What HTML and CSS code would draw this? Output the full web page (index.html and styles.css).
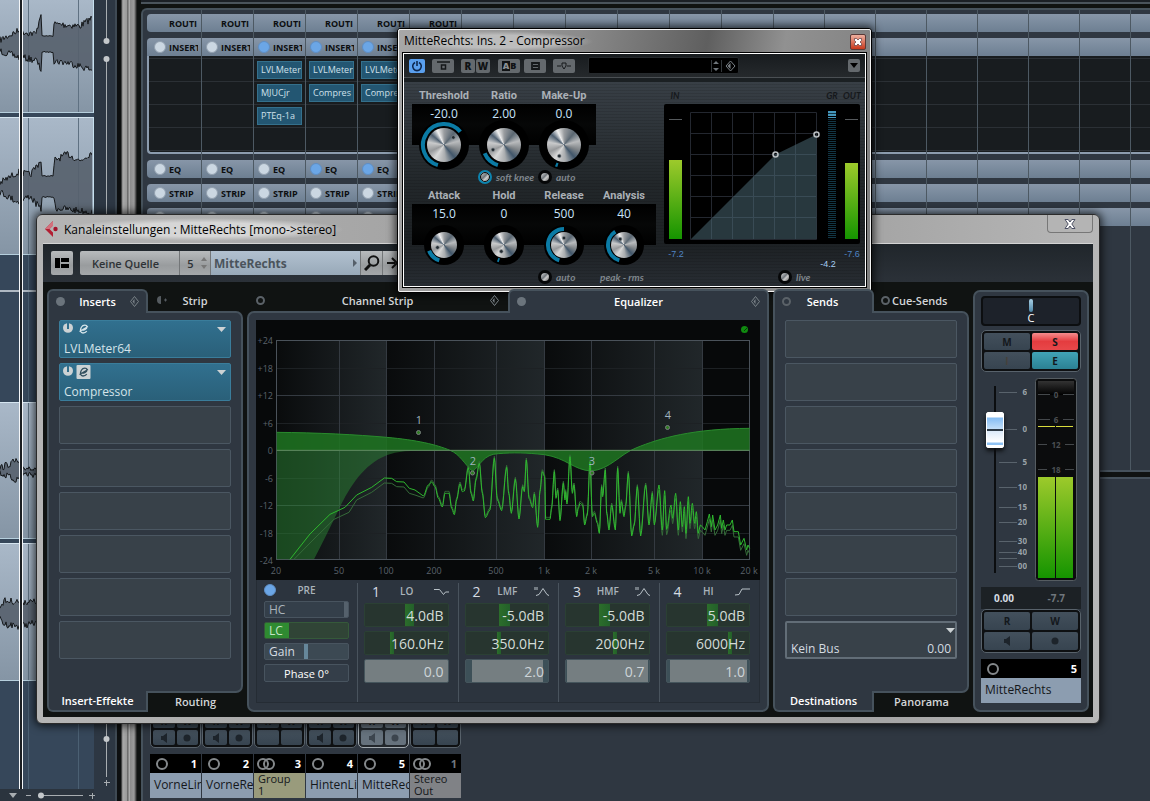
FILE: index.html
```
<!DOCTYPE html>
<html lang="de">
<head>
    <meta charset="UTF-8">
    <meta name="viewport" content="width=device-width, initial-scale=1.0">
    <title>Kanaleinstellungen : MitteRechts</title>
    <link rel="stylesheet" href="styles.css">
</head>
<body>
    <div class="arrange">
        <div class="tracks">
            <div class="clip clip-a"><svg class="wave" data-wave="0" width="92" height="113"></svg></div>
            <div class="clip clip-b"><svg class="wave" data-wave="1" width="92" height="137"></svg></div>
            <div class="lane lane-a"></div>
            <div class="lane lane-b"></div>
            <div class="clip clip-c"><svg class="wave" data-wave="2" width="92" height="137"></svg></div>
            <div class="clip clip-d"><svg class="wave" data-wave="3" width="92" height="138"></svg></div>
            <div class="lane lane-c"></div>
            <div class="cursor"></div>
        </div>
        <div class="zoom-x">
            <svg width="117" height="12"><path d="M9 4h8l-4 5z" fill="#a8adb1"/><path d="M26 6.500h5M38 6.500h45M89 6.500h6M92.500 4v6" stroke="#a8adb1" fill="none"/><circle cx="41" cy="6.500" r="3" fill="#c4c8cb"/></svg>
        </div>
    </div>
    <div class="zoom-y">
        <svg width="24" height="70"><path d="M12.500 0v41M12.500 59v11" stroke="#a8adb1"/><circle cx="12.500" cy="41" r="3" fill="#c4c8cb"/><circle cx="12.500" cy="59" r="3" fill="#c4c8cb"/></svg>
        <div class="zoom-y-line"></div>
        <svg width="24" height="76"><path d="M12.500 0v52M10 57.500h6M12.500 55v6" stroke="#a8adb1"/><circle cx="12.500" cy="14" r="3" fill="#c4c8cb"/></svg>
    </div>
    <div class="divider"></div>

    <div class="mixer">
        <div class="rack" id="rack"></div>
        <div class="faders">
            <div class="strips" id="strips"></div>
        </div>
    </div>

    <section class="window channel-window">
        <header class="titlebar">
            <svg width="16" height="16" viewBox="0 0 16 16"><path d="M9 0L1 8l8 8v-4.500L5.500 8 9 4.500z" fill="#b21f33"/><path d="M9 0L1 8h4.500L9 4.500z" fill="#d4707c"/><circle cx="11.500" cy="8" r="2.200" fill="#a3142b"/></svg>
            <h1>Kanaleinstellungen : MitteRechts [mono-&gt;stereo]</h1>
            <button class="close" aria-label="Schließen"><svg width="12" height="10" viewBox="0 0 12 10"><path d="M1 .5h3.200L6 3 7.800.5H11L7.800 5 11 9.500H7.800L6 7 4.200 9.500H1L4.200 5z" fill="#fff" stroke="#4b4f63"/></svg></button>
        </header>
        <div class="content">
            <div class="toolbar">
                <button class="tool" aria-label="Layout"><svg width="14" height="10"><path d="M0 0h5v10H0zM6 0h8v4H6zM6 6h8v4H6z"/></svg></button>
                <div class="tool-group">
                    <button class="source">Keine Quelle</button>
                    <button class="number">5 <svg width="6" height="12"><path d="M3 0l3 4H0zM3 12l3-4H0z" fill="#777"/></svg></button>
                    <button class="name">MitteRechts <svg width="4" height="8"><path d="M0 0l4 4-4 4z" fill="#56606a"/></svg></button>
                    <button class="icon" aria-label="Suchen"><svg width="16" height="16" fill="none" stroke="#111" stroke-width="2"><circle cx="9.500" cy="6" r="4.800"/><path d="M6 10L1 15" stroke-width="3"/></svg></button>
                    <button class="icon" aria-label="Gehe zu"><svg width="14" height="16" fill="none" stroke="#111" stroke-width="2"><path d="M0 8h8M5 3l5 5-5 5"/></svg></button>
                </div>
            </div>
            <div class="panels">
                <section class="panel side">
                    <div class="tabs">
                        <button class="tab active"><i class="led"></i><span>Inserts</span><svg class="diamond" width="9" height="11"><path d="M4.500.5l4 5-4 5-4-5z"/><path class="half" d="M4.500 3v5l-2-2.500z"/></svg></button>
                        <button class="tab offset"><svg width="10" height="8"><path d="M4 0a4 4 0 0 0 0 8z" fill="#555b60"/><path d="M7 4h3M8.500 2.500v3" stroke="#555b60"/></svg><span>Strip</span></button>
                    </div>
                    <div class="body slots">
                        <button class="slot filled"><svg width="32" height="14"><use href="#slot-icons"/></svg><svg class="arrow" width="9" height="5"><path d="M0 0h9L4.500 5z"/></svg><b>LVLMeter64</b></button>
                        <button class="slot filled open"><svg width="32" height="14"><rect x="16.500" width="14" height="14" rx="1" fill="#ccd2d4"/><use href="#slot-icons"/></svg><svg class="arrow" width="9" height="5"><path d="M0 0h9L4.500 5z"/></svg><b>Compressor</b></button>
                        <button class="slot" aria-label="Insert 3"></button>
                        <button class="slot" aria-label="Insert 4"></button>
                        <button class="slot" aria-label="Insert 5"></button>
                        <button class="slot" aria-label="Insert 6"></button>
                        <button class="slot" aria-label="Insert 7"></button>
                        <button class="slot" aria-label="Insert 8"></button>
                    </div>
                    <div class="tabs bottom">
                        <button class="tab active"><span>Insert-Effekte</span></button>
                        <button class="tab"><span>Routing</span></button>
                    </div>
                </section>

                <section class="panel eq">
                    <div class="tabs">
                        <button class="tab"><i class="led off"></i><span>Channel Strip</span><svg class="diamond" width="9" height="11"><path d="M4.500.5l4 5-4 5-4-5z"/><path class="half" d="M4.500 3v5l-2-2.500z"/></svg></button>
                        <button class="tab active"><i class="led"></i><span>Equalizer</span><svg class="diamond" width="9" height="11"><path d="M4.500.5l4 5-4 5-4-5z"/><path class="half" d="M4.500 3v5l-2-2.500z"/></svg></button>
                    </div>
                    <div class="body">
                        <svg class="eq-display" viewBox="0 0 504 260">
                            <defs>
                                <linearGradient id="decade"><stop offset="0" stop-color="#090b0c"/><stop offset="1" stop-color="#21272a"/></linearGradient>
                                <g id="slot-icons"><path d="M4.500 2.300a5 5 0 1 0 7 0L9 1.300V7H7V1.300z" fill="#ccd2d4"/><path d="M20.500 8c3 .8 6.500-1 6.500-3 0-2.500-4-2.500-5.500 0-2 3-1 6 1.500 6 1.500 0 3-.8 3.800-1.800M19.500 9.500l8.500-5" fill="none" stroke="currentColor" stroke-width="1.300"/></g>
                            </defs>
                            <rect width="504" height="260" fill="#07090a"/>
                            <g fill="url(#decade)">
                                <rect x="20" y="20" width="111" height="220"/>
                                <rect x="131" y="20" width="158" height="220"/>
                                <rect x="289" y="20" width="158" height="220"/>
                            </g>
                            <path d="M20 48.500h474M20 103.500h474M20 158.500h474M20 213.500h474" stroke="#1d2124"/>
                            <path d="M83.500 20v220M130.500 20v220M178.500 20v220M240.500 20v220M288.500 20v220M335.500 20v220M398.500 20v220M446.500 20v220M20 75.500h474M20 185.500h474M20 130.500h474" stroke="#343a41"/>
                            <rect x="20.500" y="20.500" width="473" height="219" fill="none" stroke="#4a525a"/>
                            <g transform="translate(-6 110) scale(.33333)">
                                <path d="M80 61H550C480 62 440 64 410 76C340 104 300 170 268 235Q225 325 192 388H80z" fill="#2e8f37" fill-opacity=".46"/>
                                <path d="M80 7C200 8 320 14 410 22S560 44 600 61C630 72 645 105 668 124C690 108 700 72 745 71C790 67 830 68 883 74C950 84 970 120 1024 123C1080 118 1110 72 1158 54C1230 24 1330 -4 1499 -5V61H80z" fill="#1f7521" fill-opacity=".85"/>
                                <path d="M80 7C200 8 320 14 410 22S560 44 600 61C630 72 645 105 668 124C690 108 700 72 745 71C790 67 830 68 883 74C950 84 970 120 1024 123C1080 118 1110 72 1158 54C1230 24 1330 -4 1499 -5" class="line" stroke="#298a2d"/>
                                <path d="M80 61H1499" class="line" stroke="#5f8b60"/>
                                <polyline id="spectrumBack" class="line" stroke="#356b39"/>
                                <polyline id="spectrum" class="line bright" points="120,388 180,312 240,253 285,232 320,195 365,172 403,144 425,145 440,155 462,156 478,175 495,180 520,198 535,165 545,156 555,170 565,205 577,231 585,190 597,190 605,235 613,254 620,210 630,162 637,185 643,183 655,113 663,190 670,213 678,150 688,100 697,190 706,263 720,240 733,85 742,210 755,242 770,112 776,190 784,250 796,148 807,267 818,170 823,185 829,90 837,205 848,233 853,192 863,292 870,185 877,125 884,140 887,268 900,268 905,235 913,125 918,205 923,180 930,272 940,160 945,210 947,185 951,222 960,80 967,190 972,165 980,260 985,235 990,220 998,225 1004,285 1012,255 1020,95 1027,260 1033,250 1042,280 1048,310 1055,170 1058,200 1066,120 1070,250 1077,300 1085,225 1096,300 1103,115 1110,250 1114,215 1122,260 1127,230 1135,130 1145,318 1153,285 1162,170 1172,318 1187,165 1197,285 1207,190 1213,285 1227,165 1237,300 1244,182 1250,298 1263,225 1268,265 1277,190 1285,300 1291,215 1297,290 1303,230 1308,310 1315,200 1320,280 1327,220 1334,280 1339,245 1345,310 1351,285 1357,290 1365,300 1372,275 1378,252 1384,290 1388,255 1395,300 1403,285 1411,255 1415,295 1420,270 1425,300 1430,285 1440,285 1447,270 1452,305 1465,305 1472,345 1482,325 1490,360 1494,345 1499,355"/>
                            </g>
                            <g class="axis axis-y">
                                <text x="17" y="24">+24</text><text x="17" y="52">+18</text><text x="17" y="79">+12</text><text x="17" y="107">+6</text><text x="17" y="134">0</text><text x="17" y="162">-6</text><text x="17" y="189">-12</text><text x="17" y="217">-18</text><text x="17" y="244">-24</text>
                            </g>
                            <g class="axis axis-x">
                                <text x="20" y="254">20</text><text x="83" y="254">50</text><text x="130" y="254">100</text><text x="178" y="254">200</text><text x="240" y="254">500</text><text x="288" y="254">1 k</text><text x="335" y="254">2 k</text><text x="398" y="254">5 k</text><text x="446" y="254">10 k</text><text x="493" y="254">20 k</text>
                            </g>
                            <g fill="#2f7d22" stroke="#7a7f80"><circle cx="162.500" cy="112.500" r="2"/><circle cx="216.500" cy="153" r="2"/><circle cx="336" cy="153" r="2"/><circle cx="411.500" cy="107.500" r="2"/></g>
                            <g class="band-label"><text x="163" y="104">1</text><text x="217" y="145">2</text><text x="336" y="145">3</text><text x="412" y="99">4</text></g>
                            <circle cx="488.500" cy="9.500" r="3.500" fill="#108a10"/><path d="M488 11l3-3" stroke="#063c06"/>
                        </svg>
                        <div class="bands">
                            <div class="band pre">
                                <div class="band-head"><i class="dot on"></i><span>PRE</span></div>
                                <button class="filter hc">HC</button>
                                <button class="filter lc">LC</button>
                                <button class="filter gain">Gain</button>
                                <button class="filter phase">Phase 0°</button>
                            </div>
                            <div class="band">
                                <div class="band-head"><em>1</em><span>LO</span><svg width="15" height="9"><path d="M0 2.500h5.500l4 5 2-2.500H15"/></svg></div>
                                <input type="text" class="field" aria-label="Gain 1" value="4.0dB" style="--from:40px;--to:49px">
                                <input type="text" class="field" aria-label="Frequenz 1" value="160.0Hz" style="--from:25px;--to:29px">
                                <input type="text" class="field q" aria-label="Güte 1" value="0.0" style="--from:0px;--to:84px">
                            </div>
                            <div class="band">
                                <div class="band-head"><em>2</em><span>LMF</span><svg width="15" height="9"><path d="M1 0v3M3 0v3M2 8.500l3-1 4-6 4 6 2 1"/></svg></div>
                                <input type="text" class="field" aria-label="Gain 2" value="-5.0dB" style="--from:33px;--to:44px">
                                <input type="text" class="field" aria-label="Frequenz 2" value="350.0Hz" style="--from:31px;--to:35px">
                                <input type="text" class="field q" aria-label="Güte 2" value="2.0" style="--from:6px;--to:77px">
                            </div>
                            <div class="band">
                                <div class="band-head"><em>3</em><span>HMF</span><svg width="15" height="9"><path d="M1 0v3M3 0v3M2 8.500l3-1 4-6 4 6 2 1"/></svg></div>
                                <input type="text" class="field" aria-label="Gain 3" value="-5.0dB" style="--from:33px;--to:44px">
                                <input type="text" class="field" aria-label="Frequenz 3" value="2000Hz" style="--from:47px;--to:51px">
                                <input type="text" class="field q" aria-label="Güte 3" value="0.7" style="--from:1px;--to:82px">
                            </div>
                            <div class="band">
                                <div class="band-head"><em>4</em><span>HI</span><svg width="15" height="9"><path d="M0 8l4-.5 3-5.500h8"/></svg></div>
                                <input type="text" class="field" aria-label="Gain 4" value="5.0dB" style="--from:40px;--to:51px">
                                <input type="text" class="field" aria-label="Frequenz 4" value="6000Hz" style="--from:61px;--to:65px">
                                <input type="text" class="field q" aria-label="Güte 4" value="1.0" style="--from:3px;--to:80px">
                            </div>
                        </div>
                    </div>
                </section>

                <section class="panel side">
                    <div class="tabs">
                        <button class="tab active offset"><i class="led off"></i><span>Sends</span></button>
                        <button class="tab cue"><i class="led off"></i><span class="tight">Cue-Sends</span></button>
                    </div>
                    <div class="body slots">
                        <button class="slot" aria-label="Send 1"></button>
                        <button class="slot" aria-label="Send 2"></button>
                        <button class="slot" aria-label="Send 3"></button>
                        <button class="slot" aria-label="Send 4"></button>
                        <button class="slot" aria-label="Send 5"></button>
                        <button class="slot" aria-label="Send 6"></button>
                        <button class="slot" aria-label="Send 7"></button>
                        <button class="slot bus"><svg class="arrow" width="9" height="5"><path d="M0 0h9L4.500 5z"/></svg><b>Kein Bus</b><b>0.00</b></button>
                    </div>
                    <div class="tabs bottom">
                        <button class="tab active"><span>Destinations</span></button>
                        <button class="tab"><span>Panorama</span></button>
                    </div>
                </section>

                <section class="channel">
                    <div class="pan"><i></i><span>C</span></div>
                    <div class="pad top">
                        <button>M</button><button class="solo">S</button>
                        <button class="dim">I</button><button class="edit">E</button>
                    </div>
                    <div class="levels">
                        <input type="range" class="fader" min="0" max="100" value="83" aria-label="Pegel">
                        <svg width="28" height="204">
                            <path d="M0 14.500h18M6 51.500h12M0 84.500h18M0 109.500h18M0 129.500h18M0 144.500h18M0 163.500h18M0 174.500h18M0 180.500h18M0 188.500h18" stroke="#59636c"/>
                            <g class="scale"><text x="28" y="17">6</text><text x="28" y="54">0</text><text x="28" y="87">5</text><text x="28" y="112">10</text><text x="28" y="132">15</text><text x="28" y="147">20</text><text x="28" y="166">30</text><text x="28" y="177">40</text><text x="28" y="191">00</text></g>
                        </svg>
                        <svg class="meter" width="42" height="203">
                            <defs><linearGradient id="green" x2="0" y2="1"><stop offset="0" stop-color="#9dca2b"/><stop offset="1" stop-color="#159400"/></linearGradient><linearGradient id="metertop" x2="0" y2="1"><stop offset="0" stop-color="#333"/><stop offset="1" stop-color="#000"/></linearGradient></defs>
                            <rect x=".5" y=".5" width="41" height="202" rx="3" fill="#0b0c0d" stroke="#555c61"/>
                            <rect x="3" y="3" width="36" height="14" fill="url(#metertop)"/>
                            <path d="M3 16.500h12M28 16.500h11M3 41.500h12M28 41.500h11M3 66.500h9M30 66.500h9M3 91.500h9M30 91.500h9" stroke="#44484b"/>
                            <g class="scale dark"><text x="21" y="20">0</text><text x="21" y="45">6</text><text x="21" y="70">12</text><text x="21" y="95">18</text></g>
                            <path d="M3 48.500h17M21 48.500h17" stroke="#d9dc3c"/>
                            <rect x="3" y="99" width="17" height="101" fill="url(#green)"/><rect x="21" y="99" width="17" height="101" fill="url(#green)"/>
                        </svg>
                    </div>
                    <div class="readout"><span>0.00</span><span class="peak">-7.7</span></div>
                    <div class="pad">
                        <button>R</button><button>W</button>
                        <button aria-label="Monitor"><svg width="6" height="10"><path d="M0 3h2l4-3v10L2 7H0z"/></svg></button>
                        <button aria-label="Aufnahme"><svg width="8" height="8"><circle cx="4" cy="4" r="3.500"/></svg></button>
                    </div>
                    <div class="nameplate"><div class="plate-top"><i class="ring"></i><span>5</span></div><div class="plate-name">MitteRechts</div></div>
                </section>
            </div>
        </div>
    </section>

    <section class="window plugin-window">
        <header class="titlebar">
            <h2>MitteRechts: Ins. 2 - Compressor</h2>
            <button class="close red" aria-label="Schließen"><svg width="8" height="8" viewBox="0 0 8 8"><path d="M.5.500h2L4 2l1.500-1.500h2v2L6 4l1.500 1.500v2h-2L4 6 2.500 7.500h-2v-2L2 4 .5 2.500z" fill="#fff" stroke="#5a3a40" stroke-width=".7"/></svg></button>
        </header>
        <div class="plugin">
            <div class="plugin-bar">
                <button class="key on" aria-label="Ein"><svg width="12" height="12" fill="none" stroke="#0d2850" stroke-width="1.600"><path d="M4 2.500a4.300 4.300 0 1 0 4 0M6 1v5"/></svg></button>
                <button class="key wide" aria-label="Bypass"><svg width="13" height="9" fill="none" stroke="#15181a" stroke-width="1.500"><path d="M0 1h13M4.500 4h4v4h-4z"/></svg></button>
                <span class="pair"><button class="key">R</button><button class="key">W</button></span>
                <button class="key wide ab"><i>A</i>B</button>
                <button class="key wide" aria-label="Kopieren"><svg width="9" height="8" fill="none" stroke="#15181a" stroke-width="1.800"><path d="M1 1h7v6H1zM2 4h5"/></svg></button>
                <button class="key wide" aria-label="Side-Chain"><svg width="14" height="8" fill="none" stroke="#15181a"><path d="M0 4h4M10 4h4M5 1h4v3L7 7 5 4z"/></svg></button>
                <div class="preset">
                    <input type="text" aria-label="Preset">
                    <svg width="8" height="12"><path d="M4 1l3 3H1zM4 11l3-3H1z" fill="#6f767c"/></svg>
                    <svg class="diamond" width="17" height="12"><path d="M8.500 1l4.500 5-4.500 5L4 6z"/><path class="half" d="M8.500 3v6L5.500 6z"/></svg>
                </div>
                <button class="key menu" aria-label="Menü"><svg width="8" height="5"><path d="M0 0h8L4 5z"/></svg></button>
            </div>
            <div class="plugin-body">
                <div class="controls">
                    <div class="knobs three" id="knobsTop"></div>
                    <div class="toggles">
                        <label class="second"><input type="checkbox" checked>soft knee</label>
                        <label><input type="checkbox">auto</label>
                    </div>
                    <div class="knobs small" id="knobsBottom"></div>
                    <div class="toggles">
                        <label class="third"><input type="checkbox">auto</label>
                        <span>peak - rms</span>
                    </div>
                </div>
                <div class="graph">
                    <svg width="198" height="182">
                        <g class="caption"><text x="11" y="11">IN</text><text x="168" y="11">GR</text><text x="188" y="11">OUT</text></g>
                        <rect y="16" width="196" height="140" rx="2" fill="#000"/>
                        <path d="M26.500 24.500h126v127h-126zM47.500 24v127M68.500 24v127M89.500 24v127M110.500 24v127M131.500 24v127M26 45.500h126M26 66.500h126M26 87.500h126M26 108.500h126M26 129.500h126" fill="none" stroke="#23272f"/>
                        <path d="M27 151L111.500 66.500 152.500 46.500V151z" fill="#4f6f7b" fill-opacity=".5"/>
                        <g fill="none" stroke="#b9bdc0" stroke-width="1.600"><circle cx="111.500" cy="66.500" r="2.500"/><circle cx="152.500" cy="46.500" r="2.500"/></g>
                        <path d="M5 31.500h13M181 31.500h13" stroke="#55595c"/>
                        <rect x="5" y="72" width="13" height="79" fill="url(#green)"/>
                        <rect x="181" y="75" width="13" height="76" fill="url(#green)"/>
                        <path d="M168 23v128" stroke="#123645" stroke-width="8" stroke-dasharray="1 1"/>
                        <path d="M168 23v7" stroke="#4596bb" stroke-width="8" stroke-dasharray="2 1"/>
                        <g class="db"><text x="12" y="169">-7.2</text><text x="164" y="179" class="lit">-4.2</text><text x="188" y="169">-7.6</text></g>
                    </svg>
                    <label class="live"><input type="checkbox">live</label>
                </div>
            </div>
        </div>
    </section>

    <script src="script.js"></script>
</body>
</html>
```
FILE: styles.css
```
* {
    box-sizing: border-box;
}
body {
    margin: 0;
    height: 100vh;
    overflow: hidden;
    display: flex;
    position: relative;
    background: #101312;
    font-family: "Open Sans", sans-serif;
    font-size: 12px;
    color: #d5dce2;
}
button, input {
    font: inherit;
    color: inherit;
    margin: 0;
    padding: 0;
    border: none;
    background: none;
}
h1, h2 {
    margin: 0;
    font-size: 12px;
    font-weight: 400;
    color: #000;
}
i, em {
    font-style: normal;
}
svg {
    flex: none;
    display: block;
}

/* arrange view */
.arrange {
    width: 94px;
    display: flex;
    flex-direction: column;
    position: relative;
}
.tracks {
    flex: 1;
    position: relative;
    overflow: hidden;
    background: #36475a;
}
.clip {
    background: linear-gradient(90deg, transparent 28px, #5f7182 28px, #5f7182 29px, transparent 29px, transparent 78px, #5f7182 78px, #5f7182 79px, transparent 79px), linear-gradient(#a9b8c8, #8595a5);
    border-right: 1px solid #c6e0ee;
    border-bottom: 1px solid #b6cfdd;
    margin-bottom: 4px;
    overflow: hidden;
}
.clip-b, .clip-d, .clip-c {
    border-top: 1px solid #d5e5f0;
}
.clip-a { height: 113px; }
.clip-b { height: 138px; margin-bottom: 0; }
.clip-c { height: 137px; }
.clip-d { height: 138px; margin-bottom: 0; }
.lane {
    background: linear-gradient(90deg, transparent 28px, #4b6073 28px, #4b6073 29px, transparent 29px, transparent 78px, #4b6073 78px, #4b6073 79px, transparent 79px);
}
.lane-a { height: 37px; border-bottom: 2px solid #aeb8c2; }
.lane-b { height: 110px; }
.lane-c { height: 108px; }
.wave {
    fill: #56616d;
    fill-opacity: .9;
    stroke: #16191c;
}
.cursor {
    position: absolute;
    left: 19px;
    top: 0;
    bottom: 0;
    width: 4px;
    background: #1a1e22;
    border: solid #f4f6f8;
    border-width: 0 1px;
}
.zoom-x {
    height: 12px;
    background: #2b343e;
}
.zoom-y {
    width: 23px;
    display: flex;
    flex-direction: column;
    background: #2d3743;
    border-right: 2px solid #3f4a54;
}
.zoom-y svg {
    overflow: hidden;
    width: 21px;
}
.zoom-y-line {
    flex: 1;
    background: linear-gradient(90deg, transparent 12px, #a8adb1 12px, #a8adb1 13px, transparent 13px);
}
.divider {
    width: 24px;
    background: linear-gradient(90deg, #0d0f10 4px, #777 5px, #a9a9a9 6px, #999 10px, #444 11px, #ccc 12px, #8b8b8b 13px, #9c9c9c 17px, #444 19px, #101312 20px);
}

/* mixer behind the windows */
.mixer {
    flex: 1;
    min-width: 0;
    display: flex;
    flex-direction: column;
    gap: 5px;
    padding-top: 8px;
    background: linear-gradient(#1b2026 2px, #4a545c 2px, #4a545c 4px, #101312 4px);
}
.rack {
    height: 464px;
    flex: none;
    display: flex;
    overflow: hidden;
    padding: 0 0 0 4px;
    background: #2f3741;
    border: solid #46525c;
    border-width: 2px 0 2px 2px;
    border-radius: 6px 0 0 6px;
}
.rack-col {
    width: 51px;
    flex: none;
    padding-top: 4px;
    border-right: 1px solid #4d5963;
}
.rack-col.used {
    width: 52px;
}
.rack-col.used:first-child {
    width: 55px;
}
.rack-col:first-child .cell {
    border-radius: 4px 0 0 4px;
    padding-left: 7px;
}
.rack-col:first-child .cell.insert-head {
    border-bottom-left-radius: 0;
}
.rack-col:first-child .inserts {
    border-left: 2px solid #8c9cae;
    border-bottom-left-radius: 4px;
}
.cell {
    display: flex;
    align-items: center;
    gap: 3px;
    height: 18px;
    margin-bottom: 6px;
    padding-left: 4px;
    background: linear-gradient(#8796a8, #6d7f92);
    color: #0c0e10;
    font-size: 9px;
    font-weight: 700;
}
.cell span {
    overflow: hidden;
    white-space: nowrap;
    margin-right: 3px;
}
.cell.insert-head {
    margin-bottom: 0;
}
.cell.plain span {
    margin-left: 15px;
}
.dot {
    flex: none;
    width: 12px;
    height: 12px;
    border-radius: 50%;
    background: #cbd7e2;
    border: 1px solid #93a1b0;
}
.dot.on {
    background: #6ba6e6;
    border-color: #5f8ec4;
}
.inserts {
    height: 98px;
    margin-bottom: 6px;
    padding: 2px 3px 0;
    background: linear-gradient(#2b3035 1px, transparent 1px) 0 25px / 100% 23px, #181c1f;
    border-bottom: 2px solid #8c9cae;
}
.inserts button {
    display: block;
    width: 100%;
    height: 18px;
    margin: 3px 0 5px;
    padding: 0 3px;
    overflow: hidden;
    white-space: nowrap;
    text-align: left;
    font-size: 9px;
    line-height: 16px;
    background: #235672;
    border: 1px solid #34708c;
    color: #cfe0ea;
}
.faders {
    flex: 1;
    display: flex;
    align-items: flex-end;
    padding: 0 0 3px 7px;
    background: #2f3741;
    border: solid #46525c;
    border-width: 2px 0 0 2px;
    border-radius: 6px 0 0 0;
}
.strips {
    display: flex;
    gap: 1px;
}
.strip {
    width: 51px;
}

/* button pads */
.pad {
    display: grid;
    grid-template-columns: 1fr 1fr;
    grid-auto-rows: 18px;
    gap: 2px;
    padding: 2px;
    background: #0e1012;
    border: 1px solid #58626b;
    border-radius: 5px;
}
.pad.top {
    grid-auto-rows: 17px;
}
.pad button {
    display: flex;
    align-items: center;
    justify-content: center;
    background: linear-gradient(#43505c, #374450);
    color: #14181c;
    font-size: 10px;
    font-weight: 700;
    border-radius: 2px;
}
.pad svg {
    fill: #1d242b;
}
.pad .dim {
    color: #46423c;
}
.pad .solo {
    background: linear-gradient(#f58d8d, #e43c3f 50%, #e8484a);
}
.pad .edit {
    background: linear-gradient(#41a3b7, #2b8193);
}
.strip .pad {
    grid-auto-rows: 15px;
    margin-bottom: 6px;
}
.strip.selected .pad {
    background: #22272c;
    border-color: #a2aab0;
}
.strip.selected .pad button {
    background: #66727d;
}
.strip.selected .pad svg {
    fill: #3c454e;
}
.plate-top {
    display: flex;
    align-items: center;
    justify-content: space-between;
    height: 19px;
    padding: 0 4px 0 6px;
    background: #000;
    color: #fff;
    font-size: 11px;
    font-weight: 700;
}
.ring {
    width: 12px;
    height: 12px;
    border: 2px solid #84888b;
    border-radius: 50%;
}
.ring + .ring {
    margin: 0 auto 0 -6px;
}
.stereo {
    padding-left: 3px;
}
.plate-name {
    height: 25px;
    padding: 0 4px;
    overflow: hidden;
    background: #8c9db0;
    color: #14171a;
    line-height: 24px;
    white-space: nowrap;
}
.plate-name.group, .plate-name.out {
    padding-right: 10px;
    white-space: normal;
    line-height: 12px;
    font-size: 11px;
}
.plate-name.group { background: #999b7c; }
.plate-name.out { background: #808286; }

/* windows */
.window {
    position: absolute;
    box-shadow: 0 0 8px 2px rgba(0, 0, 0, .7);
}
.titlebar {
    display: flex;
    align-items: center;
}
.channel-window {
    left: 36px;
    right: 50px;
    top: 214px;
    padding: 0 6px 6px;
    border: 1px solid #2b2b2b;
    border-radius: 6px;
    background: linear-gradient(90deg, #b5b5b5, #a2a2a2 40%, #a6a6a6 80%, #b7b7b7);
}
.channel-window .titlebar {
    height: 28px;
    padding-left: 1px;
}
.channel-window h1 {
    background: radial-gradient(closest-side, #d6d6d6 60%, transparent);
    padding: 3px 8px 3px 4px;
}
.close {
    align-self: flex-start;
    width: 46px;
    height: 18px;
    margin-left: auto;
    display: grid;
    place-items: center;
    border: 1px solid #777;
    border-top: none;
    border-radius: 0 0 4px 4px;
    background: #b4b4b4;
}
.content {
    background: #101312;
    border-top: 1px solid #d4d4d4;
}
.toolbar {
    height: 38px;
    display: flex;
    align-items: center;
    gap: 7px;
    padding-left: 8px;
    background: linear-gradient(#20262b, #2b3138);
    color: #2e3236;
}
.toolbar button {
    display: flex;
    align-items: center;
    justify-content: center;
    height: 24px;
    background: linear-gradient(#b8bbbd, #999c9e 60%, #a5a8aa);
    border-right: 1px solid #737678;
    font-size: 11px;
    font-weight: 600;
}
.toolbar .tool {
    width: 22px;
    border: none;
    border-radius: 2px;
}
.tool-group {
    display: flex;
}
.toolbar .source { width: 100px; padding-right: 8px; border-radius: 2px 0 0 2px; }
.toolbar .number { width: 31px; gap: 7px; padding-left: 4px; }
.toolbar .name {
    width: 150px;
    justify-content: space-between;
    padding: 0 3px;
    background: linear-gradient(#b2c1d0, #98a9b8);
    color: #4b545c;
    font-size: 12px;
    font-weight: 700;
}
.toolbar .icon { width: 22px; }

/* panels */
.panels {
    display: flex;
    gap: 4px;
    padding: 7px 4px 5px;
}
.panel {
    display: flex;
    flex-direction: column;
}
.side {
    width: 196px;
}
.eq {
    flex: 1;
}
.tabs {
    display: flex;
    height: 24px;
    margin-bottom: -2px;
    z-index: 1;
}
.tab {
    flex: 1;
    display: flex;
    align-items: center;
    padding: 0 7px 2px;
    border: 2px solid transparent;
    color: #d3d6d8;
    font-size: 11px;
    font-weight: 600;
}
.side .tab:first-child {
    flex: 0 0 101px;
}
.tab.active {
    background: #2f3741;
    border-color: #46525c;
    border-bottom: none;
    border-radius: 6px 6px 0 0;
    color: #fff;
}
.tab.offset {
    padding-right: 18px;
}
.tab.cue {
    padding-left: 5px;
}
.tab span {
    flex: 1;
    text-align: center;
    white-space: nowrap;
}
.tab .tight {
    flex: none;
    margin-left: 2px;
}
.tabs.bottom {
    height: 21px;
    margin: -2px 0 0;
}
.bottom .tab {
    padding: 0;
}
.bottom .tab.active {
    border: 2px solid #46525c;
    border-top: none;
    border-radius: 0 0 0 6px;
}
.led {
    width: 9px;
    height: 9px;
    border-radius: 50%;
    background: #6b747c;
}
.led.off {
    background: none;
    border: 2px solid #5b6268;
}
.diamond {
    fill: none;
    stroke: #7b8288;
}
.diamond .half {
    fill: #7b8288;
    stroke: none;
}
.body {
    flex: 1;
    padding: 7px;
    background: #2f3741;
    border: 2px solid #46525c;
    border-radius: 0 7px 7px 0;
}
.eq .body {
    border-radius: 7px 0 7px 7px;
}
.slots {
    display: flex;
    flex-direction: column;
    gap: 5px;
    padding: 7px 10px;
}
.slot {
    display: flex;
    flex-wrap: wrap;
    justify-content: space-between;
    align-content: space-between;
    height: 38px;
    padding: 1px 4px 0;
    border: 1px solid #4b5762;
    border-radius: 2px;
    background: #384149;
}
.slot b {
    font-weight: 400;
}
.slot.filled {
    background: linear-gradient(#31708f, #2a6079);
    border-color: #3a7d9b;
    color: #d5e4ea;
    text-align: left;
}
.slot.open svg {
    color: #33505f;
}
.slot.filled > svg:first-child {
    margin-left: -4px;
}
.arrow {
    fill: #ccd2d4;
    margin-top: 5px;
}
.slot.filled b {
    width: 100%;
}
.slot.bus {
    border: 2px solid #626d77;
}
.bus .arrow {
    margin: 4px 0 0 155px;
}

/* equalizer */
.eq-display {
    width: 100%;
}
.line {
    fill: none;
    vector-effect: non-scaling-stroke;
}
.bright {
    stroke: #2eb82e;
}
.axis {
    fill: #5a626b;
    font-size: 9px;
}
.axis-y { text-anchor: end; }
.axis-x { text-anchor: middle; }
.band-label {
    fill: #9fb4bf;
    font-size: 11px;
    text-anchor: middle;
}
.bands {
    display: grid;
    grid-template-columns: 100px repeat(4, 1fr);
    height: 123px;
    padding-top: 3px;
    background: #2c343e;
    border: 1px solid #252c34;
    border-top: none;
}
.band {
    display: flex;
    flex-direction: column;
    gap: 4px;
    padding: 0 9px 0 6px;
    border-left: 1px solid #49535d;
}
.band.pre {
    padding: 0 8px 0 7px;
    border: none;
}
.band-head {
    display: flex;
    align-items: center;
    height: 16px;
    color: #a9b3ba;
    font-size: 10px;
    font-weight: 600;
}
.pre .band-head {
    height: 14px;
}
.band-head span {
    flex: 1;
    text-align: center;
}
.band-head em {
    margin-left: 8px;
    color: #d5dce2;
    font-size: 14px;
    font-weight: 400;
}
.band-head svg {
    fill: none;
    stroke: #b9c2c8;
}
.pre .band-head span {
    padding-right: 12px;
}
.filter {
    height: 17px;
    padding: 0 4px;
    border: 1px solid #48545f;
    border-radius: 2px;
    text-align: left;
    line-height: 15px;
}
.hc { background: linear-gradient(90deg, transparent 79px, #55616c 79px), #343f4a; color: #aab3ba; }
.lc { background: linear-gradient(90deg, #2f8b31 24px, #304436 24px); border-color: #35593a; color: #c4e4c6; }
.gain { background: linear-gradient(90deg, transparent 39px, #66879a 39px, #66879a 43px, transparent 43px), #3c4953; }
.phase { height: 18px; text-align: center; color: #fff; font-size: 11px; background: #343e49; }
.field {
    width: 100%;
    height: 24px;
    padding: 0 4px;
    border: 1px solid #2b4034;
    border-radius: 2px;
    background: linear-gradient(90deg, transparent var(--from), #2c6e2b var(--from), #23602a var(--to), transparent var(--to)), #27352f;
    color: #d3dcd8;
    font-size: 14px;
    text-align: right;
}
.field.q {
    background: linear-gradient(90deg, transparent var(--from), #757e81 var(--from), #757e81 var(--to), transparent var(--to)), #3d5058;
    border-color: #45555c;
    color: #cdd4d8;
}

/* channel strip */
.channel {
    width: 116px;
    padding: 4px 6px;
    margin-top: 1px;
    background: #2f3741;
    border: 2px solid #46525c;
    border-radius: 7px;
}
.pan {
    display: flex;
    flex-direction: column;
    align-items: center;
    height: 30px;
    padding-top: 1px;
    background: #1d222a;
    border: 2px solid #0c0e10;
    border-radius: 4px;
    color: #fff;
    font-size: 11px;
    line-height: 12px;
}
.pan i {
    width: 4px;
    height: 13px;
    border-radius: 2px;
    background: linear-gradient(#a9d0e5, #4f88a8);
}
.channel .pad {
    margin-top: 4px;
}
.levels {
    display: flex;
    height: 209px;
    margin-top: 6px;
}
.fader {
    appearance: none;
    writing-mode: vertical-lr;
    direction: rtl;
    width: 18px;
    height: 187px;
    margin: 8px -5px 0 5px;
    z-index: 1;
    background: linear-gradient(90deg, transparent 8px, #0b0d0f 8px, #0b0d0f 10px, transparent 10px);
}
.fader::-webkit-slider-thumb {
    appearance: none;
    width: 18px;
    height: 36px;
    border: 1px solid #fff;
    border-radius: 2px;
    background: linear-gradient(#fff 4px, #86bdf3 5px, #c3dff9 16px, #2d3a46 16px, #2d3a46 18px, #dbeafa 18px, #fff 29px, #8ec1f2 30px, #8ec1f2 32px, #fff 32px);
    box-shadow: 0 3px 4px #0c0e10;
}
.scale {
    fill: #9aa2a8;
    font-size: 8px;
    font-weight: 700;
    text-anchor: end;
}
.scale.dark {
    fill: #4c5053;
    text-anchor: middle;
}
.meter {
    margin-left: auto;
    margin-right: 4px;
}
.readout {
    display: flex;
    justify-content: space-between;
    padding: 0 16px 0 13px;
    background: #1c2125;
    font-size: 10px;
    font-weight: 700;
    line-height: 22px;
}
.peak {
    color: #70777d;
}
.channel .readout + .pad {
    margin-top: 0;
}
.channel .nameplate {
    margin-top: 6px;
}

/* compressor */
.plugin-window {
    left: 397px;
    top: 28px;
    width: 475px;
    padding: 1px 5px 5px;
    border: 1px solid #000;
    outline: 1px solid #f2f2f2;
    outline-offset: -2px;
    border-radius: 3px;
    background: linear-gradient(100deg, #a8a8a8, #8b8b8b 35%, #5f5f5f 60%, #919191 75%, #7d7d7d);
}
.plugin-window .titlebar {
    height: 23px;
}
.plugin-window h2 {
    background: radial-gradient(closest-side, #bdbdbd 60%, transparent);
    padding: 1px 8px 3px 1px;
}
.close.red {
    align-self: center;
    width: 16px;
    height: 16px;
    background: linear-gradient(#eeb0a0, #c9391d);
    border: 1px solid #5b3a38;
    border-radius: 2px;
}
.plugin {
    border: 1px solid #fff;
    outline: 1px solid #000;
    background: #1b2023;
}
.plugin-bar {
    display: flex;
    align-items: center;
    height: 24px;
    padding: 0 5px;
    background: linear-gradient(#181c1f, #25292c);
    border-bottom: 1px solid #4a4f53;
}
.key {
    display: flex;
    align-items: center;
    justify-content: center;
    width: 14px;
    height: 14px;
    background: #64696d;
    border-radius: 2px;
    color: #101214;
    font-size: 10px;
    font-weight: 800;
    line-height: 14px;
}
.key.wide { width: 22px; margin-right: 4px; }
.key.on { width: 16px; margin-right: 7px; background: #5a9fee; }
.key.on + .wide { margin-right: 7px; }
.pair { display: flex; gap: 1px; margin-right: 8px; }
.pair + .wide { font-size: 9px; }
.key.wide + .wide:nth-of-type(4) { margin-right: 7px; }
.ab i { background: #101214; color: #8b9094; line-height: 10px; padding: 0 1px; }
.key.menu { width: 12px; height: 13px; margin-left: auto; }
.preset {
    display: flex;
    align-items: center;
    width: 151px;
    height: 17px;
    margin-left: 9px;
    background: #000;
    border-radius: 2px;
    border: 1px solid #25292c;
}
.preset input {
    flex: 1;
    min-width: 0;
}
.preset svg {
    border-left: 1px solid #33383c;
    width: 10px;
}
.preset .diamond {
    width: 17px;
}
.plugin-body {
    display: flex;
    justify-content: space-between;
    margin-top: 4px;
    padding: 6px 3px 2px 8px;
    background: repeating-linear-gradient(transparent 0, transparent 2px, rgba(0, 0, 0, .1) 2px, rgba(0, 0, 0, .1) 3px), linear-gradient(#383f46, #22272a 50%, #1d2124 80%, #282d33);
}
.knobs {
    display: flex;
    width: 244px;
    background: linear-gradient(#000, #060707 50%, #000) 0 16px / 100% 41px no-repeat;
}
.knobs.three {
    width: 184px;
}
.knob {
    display: flex;
    flex-direction: column;
    align-items: center;
    width: 60px;
    margin-left: 2px;
}
.knob + .knob {
    margin-left: 0;
}
.knob label {
    height: 16px;
    font-family: Roboto, sans-serif;
    font-size: 11px;
    font-weight: 700;
    line-height: 16px;
    color: #aab0b6;
}
.knob output {
    line-height: 20px;
    color: #c9e4fb;
}
.dial {
    display: grid;
    place-items: center;
    width: 50px;
    height: 50px;
    margin-top: -4px;
    border-radius: 50%;
    background: #000;
}
.small .dial {
    width: 40px;
    height: 40px;
    margin-top: 1px;
}
.dial > * {
    grid-area: 1 / 1;
}
.face {
    width: 34px;
    height: 34px;
    border-radius: 50%;
    background: conic-gradient(#9a9da0, #5a6772 40deg, #b9bbbd 75deg, #7d8286 110deg, #41566a 140deg, #a9acae 175deg, #d8d8d8 215deg, #97999b 245deg, #c9cacb 280deg, #4e5f70 310deg, #eee 335deg, #9a9da0);
}
.small .face {
    width: 26px;
    height: 26px;
}
.toggles, .live {
    display: flex;
    font-family: Lato, sans-serif;
    font-size: 10px;
    font-weight: 700;
    font-style: italic;
    line-height: 14px;
    color: #7f868c;
}
.toggles {
    height: 14px;
    margin-bottom: 4px;
}
.knobs.small + .toggles {
    margin: 5px 0 0;
}
.toggles label {
    display: flex;
    width: 60px;
    gap: 4px;
    white-space: nowrap;
}
.toggles .second { margin-left: 66px; }
.toggles .third { margin-left: 126px; }
.toggles span { margin-left: 2px; }
input[type="checkbox"] {
    appearance: none;
    flex: none;
    width: 14px;
    height: 14px;
    border: 3px solid #060708;
    border-radius: 50%;
    background: linear-gradient(135deg, #ddd, #70767b 45%, #ccc 60%, #666);
}
input[type="checkbox"]:checked {
    border: 2px solid #0c84b0;
    outline: 1px solid #060708;
    outline-offset: -3px;
}
.graph {
    display: flex;
    flex-direction: column;
}
.caption {
    fill: #15181b;
    font-family: Lato, sans-serif;
    font-size: 9px;
    font-weight: 700;
    font-style: italic;
    text-anchor: middle;
}
.db {
    fill: #4f83c4;
    font-family: "Liberation Sans", sans-serif;
    font-size: 9px;
    text-anchor: middle;
}
.db .lit {
    fill: #a7cdf3;
}
.live {
    gap: 4px;
    margin-left: 114px;
}
```
FILE: script.js
```
// rack columns: which sections are switched on, and the loaded plug-ins
const rack = [
    { ins: 0, eq: 0, plugins: [] },
    { ins: 0, eq: 0, plugins: [] },
    { ins: 1, eq: 0, plugins: ['LVLMeter', 'MJUCjr', 'PTEq-1a'] },
    { ins: 1, eq: 1, plugins: ['LVLMeter', 'Compres'] },
    { ins: 1, eq: 1, plugins: ['LVLMeter', 'Compres'] },
    { ins: 1, eq: 0, plugins: [] }
];

function cell(text, on, extra) {
    const dot = on === null ? '' : `<i class="dot ${on ? 'on' : ''}"></i>`;
    return `<div class="cell ${extra || ''}">${dot}<span>${text}</span></div>`;
}

let html = '';
for (let i = 0; i < 20; i++) {
    const c = rack[i];
    if (c) {
        html += `<div class="rack-col used">${cell('ROUTI', null, 'plain')}${cell('INSERT', c.ins, 'insert-head')}
            <div class="inserts">${c.plugins.map(p => `<button>${p}</button>`).join('')}</div>
            ${cell('EQ', c.eq)}${cell('STRIP', 0)}${cell('', 0)}</div>`;
    } else {
        html += `<div class="rack-col ${i < 12 ? 'used' : ''}">${cell('', null)}${cell('', null, 'insert-head')}
            <div class="inserts"></div>${cell('', null)}${cell('', null)}${cell('', null)}</div>`;
    }
}
document.getElementById('rack').innerHTML = html;

const strips = [
    ['VorneLin', 1, ''], ['VorneRe', 2, ''], ['Group 1', 3, 'group'],
    ['HintenLi', 4, ''], ['MitteRec', 5, ''], ['Stereo Out', 1, 'out']
];
document.getElementById('strips').innerHTML = strips.map(([name, num, type], i) => {
    const speaker = type ? '' : '<svg width="6" height="10"><path d="M0 3h2l4-3v10L2 7H0z"/></svg>';
    const rec = type ? '' : '<svg width="8" height="8"><circle cx="4" cy="4" r="3.500"/></svg>';
    return `<div class="strip ${i === 4 ? 'selected' : ''}">
        <div class="pad"><button>R</button><button>W</button><button>${speaker}</button><button>${rec}</button></div>
        <div class="plate-top ${type ? 'stereo' : ''}"><i class="ring"></i>${type ? '<i class="ring"></i>' : ''}<span class="${type === 'out' ? 'peak' : ''}">${num}</span></div>
        <div class="plate-name ${type}">${name}</div></div>`;
}).join('');

// knobs: label, value, end angle of the ring (degrees clockwise from the top)
const START = 197;
function knob([label, value, end], r) {
    const size = r * 2 + 8;
    const c = size / 2;
    const at = (deg, rad) => {
        const a = deg * Math.PI / 180;
        return [(c + rad * Math.sin(a)).toFixed(1), (c - rad * Math.cos(a)).toFixed(1)];
    };
    const big = end - START > 180 ? 1 : 0;
    const dot = at(end, r - 9);
    return `<div class="knob"><label>${label}</label><output>${value}</output>
        <div class="dial"><div class="face"></div><svg width="${size}" height="${size}">
        <path d="M${at(START, r)}A${r} ${r} 0 ${big} 1 ${at(end, r)}" fill="none" stroke="#0b7ba5" stroke-width="4"/>
        <circle cx="${dot[0]}" cy="${dot[1]}" r="1.800" fill="#222a30" stroke="#8c9297" stroke-width=".6"/></svg></div></div>`;
}
document.getElementById('knobsTop').innerHTML =
    [['Threshold', '-20.0', 411], ['Ratio', '2.00', 247], ['Make-Up', '0.0', 203]].map(k => knob(k, 21)).join('');
document.getElementById('knobsBottom').innerHTML =
    [['Attack', '15.0', 249], ['Hold', '0', 203], ['Release', '500', 360], ['Analysis', '40', 327]].map(k => knob(k, 16)).join('');

// round off the peaks of the spectrum, the second trace runs a little beside the first
function smooth(points) {
    const out = [];
    points.forEach(([x, y], i) => {
        out.push(`${x},${y}`);
        const next = points[i + 1];
        if (!next || x < 520 || x > 1340) return;
        for (const t of [.2, .4, .6, .8]) {
            const e = t * t * (3 - 2 * t);
            out.push(`${(x + (next[0] - x) * t).toFixed(1)},${(y + (next[1] - y) * e).toFixed(1)}`);
        }
    });
    return out.join(' ');
}
const spectrum = document.getElementById('spectrum');
const main = spectrum.getAttribute('points').split(' ').map(p => p.split(',').map(Number));
spectrum.setAttribute('points', smooth(main));
document.getElementById('spectrumBack').setAttribute('points', smooth(main.map(([x, y]) => {
    const shift = x < 500 ? 15 : x < 540 ? 6 : x > 1220 ? 16 : -6;
    return [x + (x < 300 ? 12 : 0), Math.min(388, y + shift)];
})));

// clip waveforms: upper and lower envelope
const waves = [
    { up: [[0, 40], [18, 31], [36, 34], [41, 12], [42, 36], [53, 36], [54, 24], [68, 25], [80, 26], [92, 18]],
      lo: [[0, 51], [18, 57], [36, 60], [41, 70], [42, 52], [53, 52], [54, 61], [70, 63], [92, 70]] },
    { up: [[0, 65], [18, 54], [30, 57], [41, 42], [42, 58], [53, 58], [55, 42], [68, 36], [80, 43], [92, 34]],
      lo: [[0, 74], [18, 84], [30, 78], [41, 92], [42, 79], [53, 79], [56, 90], [92, 94]] },
    { up: [[0, 65], [16, 58], [24, 65], [92, 60]], lo: [[0, 70], [16, 77], [24, 71], [92, 74]] },
    { up: [[0, 62], [4, 57], [36, 58], [92, 58]], lo: [[0, 75], [4, 80], [18, 82], [36, 79], [92, 80]] }
];
let seed = 7;
function noise() {
    seed = (seed * 16807) % 2147483647;
    return seed / 2147483647 - .5;
}
function envelope(points) {
    const out = [];
    for (let x = 0; x <= 92; x++) {
        let k = 1;
        while (points[k][0] < x) k++;
        const [x0, y0] = points[k - 1];
        const [x1, y1] = points[k];
        const flat = x > 41 && x < 54;
        out.push(`${x},${(y0 + (y1 - y0) * (x - x0) / (x1 - x0) + noise() * (flat ? 1 : 7)).toFixed(1)}`);
    }
    return out;
}
document.querySelectorAll('.wave').forEach(svg => {
    const w = waves[svg.dataset.wave];
    const up = envelope(w.up);
    const lo = envelope(w.lo);
    svg.innerHTML = `<polygon stroke="none" points="${up.concat([...lo].reverse()).join(' ')}"/>
        <polyline fill="none" points="${up.join(' ')}"/><polyline fill="none" points="${lo.join(' ')}"/>`;
});
```
